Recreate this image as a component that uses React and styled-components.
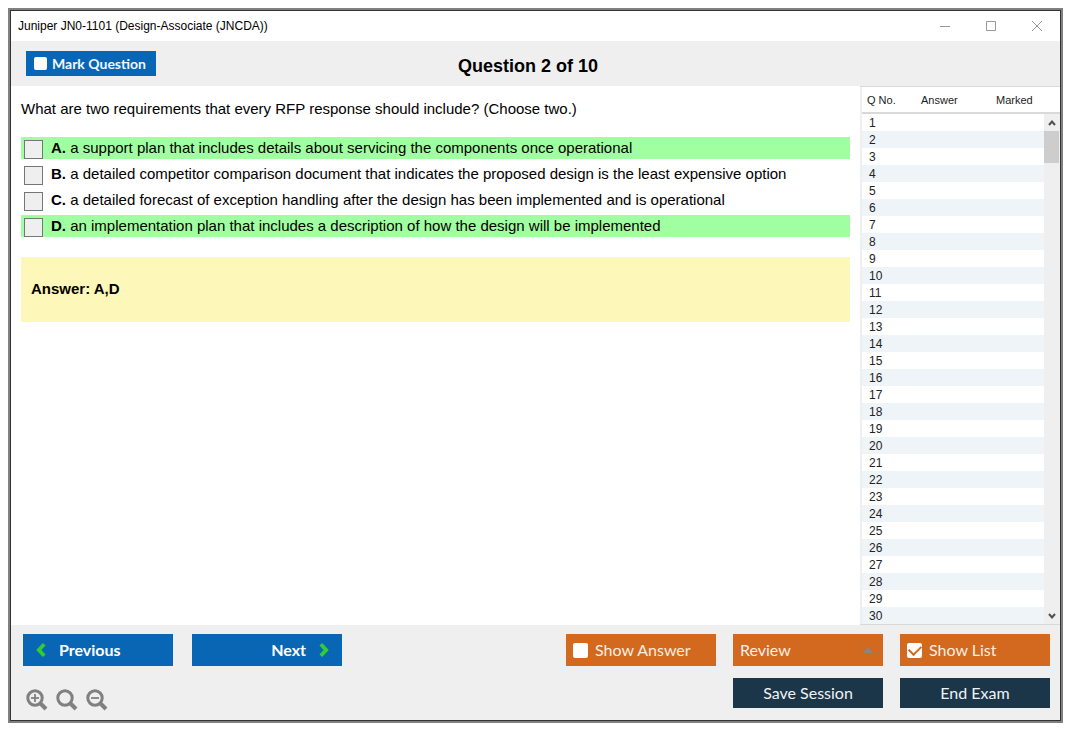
import React, { useState } from 'react';
import styled, { createGlobalStyle } from 'styled-components';

const GlobalStyle = createGlobalStyle`
	* {
		box-sizing: border-box;
	}

	body {
		margin: 8px 12px 12px 8px;
		background: #fff;
		color: #000;
		font-family: 'Liberation Sans', Arial, sans-serif;
	}

	button, input, select {
		margin: 0;
		font: inherit;
	}
`;

const options = [
	{
		letter: 'A',
		text: 'a support plan that includes details about servicing the components once operational',
		correct: true,
	},
	{
		letter: 'B',
		text: 'a detailed competitor comparison document that indicates the proposed design is the least expensive option',
		correct: false,
	},
	{
		letter: 'C',
		text: 'a detailed forecast of exception handling after the design has been implemented and is operational',
		correct: false,
	},
	{
		letter: 'D',
		text: 'an implementation plan that includes a description of how the design will be implemented',
		correct: true,
	},
];

const questionNumbers = Array.from({ length: 30 }, (_, i) => i + 1);

const Chevron = ({ right }) => (
	<svg width="10" height="16" viewBox="0 0 10 16" aria-hidden="true">
		<path
			d={right ? 'M1.8 2.2 L7.2 8 L1.8 13.8' : 'M8.2 2.2 L2.8 8 L8.2 13.8'}
			fill="none"
			stroke="#32cd32"
			strokeWidth="3.8"
		/>
	</svg>
);

const Magnifier = ({ sign }) => (
	<svg width="22" height="22" viewBox="0 0 22 22" fill="none" stroke="#808080" aria-hidden="true">
		<circle cx="9" cy="9" r="7.2" strokeWidth="3" />
		<path d="M14 14 L20 20" strokeWidth="4" />
		{sign && <path d="M5 9 H13" strokeWidth="1.8" />}
		{sign === 'plus' && <path d="M9 5 V13" strokeWidth="1.8" />}
	</svg>
);

const App = () => {
	const [marked, setMarked] = useState(false);
	const [showAnswer, setShowAnswer] = useState(false);
	const [showList, setShowList] = useState(true);

	return (
		<>
			<GlobalStyle />
			<Window>
				<TitleBar>
					<WindowTitle>Juniper JN0-1101 (Design-Associate (JNCDA))</WindowTitle>
					<WindowButton type="button" aria-label="Minimize">
						<WindowIcon viewBox="0 0 12 12">
							<path d="M1 6.5 H11" />
						</WindowIcon>
					</WindowButton>
					<WindowButton type="button" aria-label="Maximize">
						<WindowIcon viewBox="0 0 12 12">
							<path d="M1.5 1.5 H10.5 V10.5 H1.5 Z" />
						</WindowIcon>
					</WindowButton>
					<WindowButton type="button" aria-label="Close">
						<WindowIcon viewBox="0 0 12 12">
							<path d="M1 1 L11 11 M11 1 L1 11" />
						</WindowIcon>
					</WindowButton>
				</TitleBar>

				<Header>
					<MarkLabel>
						<CheckBox
							type="checkbox"
							$size={13}
							checked={marked}
							onChange={() => setMarked(!marked)}
						/>
						Mark Question
					</MarkLabel>
					<Heading>Question 2 of 10</Heading>
				</Header>

				<Main>
					<QuestionPane>
						<Question>
							What are two requirements that every RFP response should include? (Choose two.)
						</Question>
						<OptionList>
							{options.map((option) => (
								<Option key={option.letter} $correct={option.correct}>
									<OptionBox type="checkbox" />
									<span>
										<b>{option.letter}.</b> {option.text}
									</span>
								</Option>
							))}
						</OptionList>
						<AnswerBox>Answer: A,D</AnswerBox>
					</QuestionPane>

					<Sidebar>
						<ListTable>
							<thead>
								<tr>
									<HeadCell $width="54px">Q No.</HeadCell>
									<HeadCell $width="75px">Answer</HeadCell>
									<HeadCell>Marked</HeadCell>
								</tr>
							</thead>
							<tbody>
								{questionNumbers.map((number) => (
									<ListRow key={number}>
										<NumberCell>{number}</NumberCell>
										<EmptyCell />
										<EmptyCell />
									</ListRow>
								))}
							</tbody>
						</ListTable>
						<ScrollColumn>
							<ScrollHead />
							<ScrollBar>
								<ScrollButton type="button" aria-label="Scroll up">
									<svg width="8" height="8" viewBox="0 0 8 8">
										<path d="M1 6 L4 2.5 L7 6" />
									</svg>
								</ScrollButton>
								<ScrollThumb />
								<ScrollButton type="button" aria-label="Scroll down">
									<svg width="8" height="8" viewBox="0 0 8 8">
										<path d="M1 2 L4 5.5 L7 2" />
									</svg>
								</ScrollButton>
							</ScrollBar>
						</ScrollColumn>
					</Sidebar>
				</Main>

				<Footer>
					<FooterLeft>
						<NavButtons>
							<NavButton type="button">
								<Chevron />
								Previous
							</NavButton>
							<NavButton type="button" $end>
								Next
								<Chevron right />
							</NavButton>
						</NavButtons>
						<ZoomButtons>
							<ZoomButton type="button" aria-label="Zoom in">
								<Magnifier sign="plus" />
							</ZoomButton>
							<ZoomButton type="button" aria-label="Reset zoom">
								<Magnifier />
							</ZoomButton>
							<ZoomButton type="button" aria-label="Zoom out">
								<Magnifier sign="minus" />
							</ZoomButton>
						</ZoomButtons>
					</FooterLeft>

					<Actions>
						<ToggleLabel>
							<CheckBox
								type="checkbox"
								$size={15}
								checked={showAnswer}
								onChange={() => setShowAnswer(!showAnswer)}
							/>
							Show Answer
						</ToggleLabel>
						<SelectBox>
							<ReviewSelect aria-label="Review" defaultValue="review">
								<option value="review">Review</option>
							</ReviewSelect>
							<svg width="10" height="6" viewBox="0 0 10 6" aria-hidden="true">
								<path d="M0 6 L5 0 L10 6 Z" fill="#8a8580" />
							</svg>
						</SelectBox>
						<ToggleLabel>
							<CheckBox
								type="checkbox"
								$size={15}
								checked={showList}
								onChange={() => setShowList(!showList)}
							/>
							Show List
						</ToggleLabel>
						<SaveButton type="button">Save Session</SaveButton>
						<DarkButton type="button">End Exam</DarkButton>
					</Actions>
				</Footer>
			</Window>
		</>
	);
};

const Window = styled.div`
	display: flex;
	flex-direction: column;
	min-height: calc(100vh - 20px);
	border: 2px solid #808080;
	outline: 1px solid #333;
	outline-offset: -3px;
	padding: 1px;
`;

const TitleBar = styled.div`
	display: flex;
	align-items: center;
	height: 30px;
	padding-left: 7px;
`;

const WindowTitle = styled.div`
	flex: 1;
	font-size: 12px;
	line-height: 16px;
`;

const WindowButton = styled.button`
	display: flex;
	align-items: center;
	justify-content: center;
	width: 46px;
	height: 28px;
	padding: 0;
	border: none;
	background: none;
`;

const WindowIcon = styled.svg`
	width: 12px;
	height: 12px;
	fill: none;
	stroke: #999;
`;

const Header = styled.header`
	display: flex;
	align-items: center;
	height: 45px;
	padding: 0 15px;
	background: #efefef;
`;

const MarkLabel = styled.label`
	display: flex;
	align-items: center;
	gap: 5px;
	width: 130px;
	height: 25px;
	padding-left: 8px;
	background: #0866b5;
	color: #f2f7fc;
	font: bold 14px/16px Lato, sans-serif;
	white-space: nowrap;
`;

const CheckBox = styled.input`
	appearance: none;
	display: flex;
	align-items: center;
	justify-content: center;
	flex: none;
	width: ${({ $size }) => $size}px;
	height: ${({ $size }) => $size}px;
	border-radius: 2px;
	background: #fff;

	&:checked::before {
		content: '';
		width: 10px;
		height: 6px;
		margin-bottom: 3px;
		border: solid #d2691e;
		border-width: 0 0 2px 2px;
		transform: rotate(-45deg);
	}
`;

const Heading = styled.h1`
	flex: 1;
	margin: 0 145px 0 0;
	padding-top: 4px;
	font-size: 18px;
	line-height: 22px;
	text-align: center;
`;

const Main = styled.main`
	display: flex;
	flex: 1;
`;

const QuestionPane = styled.section`
	flex: 1;
	min-width: 0;
	padding: 12px 10px;
	font-size: 15px;
	line-height: 22px;
`;

const Question = styled.p`
	margin: 0;
`;

const OptionList = styled.div`
	display: flex;
	flex-direction: column;
	gap: 4px;
	margin: 17px 0 20px;
`;

const Option = styled.label`
	display: flex;
	align-items: flex-start;
	gap: 8px;
	min-height: 22px;
	padding-left: 3px;
	background: ${({ $correct }) => ($correct ? '#a0ffa0' : 'transparent')};
`;

const OptionBox = styled.input`
	appearance: none;
	flex: none;
	align-self: flex-end;
	width: 19px;
	height: 19px;
	border: 1px solid #767676;
	background: #efefef;
`;

const AnswerBox = styled.div`
	padding: 21px 10px 22px;
	background: #fdf7b9;
	font-weight: bold;
`;

const Sidebar = styled.aside`
	display: flex;
	width: 200px;
	border: solid #d9d9d9;
	border-width: 1px 0;
	box-shadow: inset 2px 0 #efefef;
	padding-left: 2px;
`;

const ListTable = styled.table`
	flex: 1;
	align-self: flex-start;
	table-layout: fixed;
	border-spacing: 0;
	color: #222;
`;

const HeadCell = styled.th`
	width: ${({ $width }) => $width || 'auto'};
	height: 27px;
	padding: 0 0 0 5px;
	border-bottom: 2px solid #d9d9d9;
	font-size: 11px;
	font-weight: normal;
	line-height: 14px;
	text-align: left;
	white-space: nowrap;
`;

const ListRow = styled.tr`
	&:nth-child(even) {
		background: #eff4f9;
	}
`;

const EmptyCell = styled.td`
	padding: 0;
`;

const NumberCell = styled.td`
	padding: 1px 0 0 7px;
	font-size: 12px;
	line-height: 16px;
`;

const ScrollColumn = styled.div`
	display: flex;
	flex-direction: column;
	width: 16px;
`;

const ScrollHead = styled.div`
	height: 27px;
	border-bottom: 2px solid #d9d9d9;
`;

const ScrollBar = styled.div`
	display: flex;
	flex: 1;
	flex-direction: column;
	background: #efefef;
`;

const ScrollButton = styled.button`
	display: flex;
	align-items: center;
	justify-content: center;
	width: 15px;
	height: 17px;
	margin-top: auto;
	padding: 0;
	border: none;
	background: none;

	&:first-child {
		margin-top: 0;
	}

	path {
		fill: none;
		stroke: #505050;
		stroke-width: 2;
	}
`;

const ScrollThumb = styled.div`
	width: 15px;
	height: 32px;
	background: #cdcdcd;
`;

const Footer = styled.footer`
	display: flex;
	justify-content: space-between;
	padding: 9px 10px 9px 12px;
	background: #efefef;
`;

const FooterLeft = styled.div`
	display: flex;
	flex-direction: column;
	gap: 23px;
`;

const NavButtons = styled.div`
	display: flex;
	gap: 19px;
`;

const NavButton = styled.button`
	display: flex;
	align-items: center;
	justify-content: ${({ $end }) => ($end ? 'flex-end' : 'flex-start')};
	gap: 13px;
	width: 150px;
	height: 32px;
	padding: 0 13px;
	border: none;
	background: #0866b5;
	color: #fff;
	font: bold 16px/20px Lato, sans-serif;
`;

const ZoomButtons = styled.div`
	display: flex;
	gap: 8px;
	padding-left: 3px;
`;

const ZoomButton = styled.button`
	display: flex;
	padding: 0;
	border: none;
	background: none;
`;

const Actions = styled.div`
	display: grid;
	grid-template-columns: repeat(3, 150px);
	grid-template-rows: 32px 30px;
	gap: 12px 17px;
	color: #fbeee4;
	font: 16px/20px Lato, sans-serif;
`;

const ToggleLabel = styled.label`
	display: flex;
	align-items: center;
	gap: 7px;
	padding-left: 7px;
	background: #d2691e;
`;

const SelectBox = styled.div`
	display: flex;
	align-items: center;
	padding: 0 10px 0 7px;
	background: #d2691e;
`;

const ReviewSelect = styled.select`
	appearance: none;
	flex: 1;
	padding: 0;
	border: none;
	background: transparent;
	color: inherit;
`;

const DarkButton = styled.button`
	border: none;
	padding: 0;
	background: #1b3549;
	color: #f0f3f5;
`;

const SaveButton = styled(DarkButton)`
	grid-column: 2;
`;

export default App;
